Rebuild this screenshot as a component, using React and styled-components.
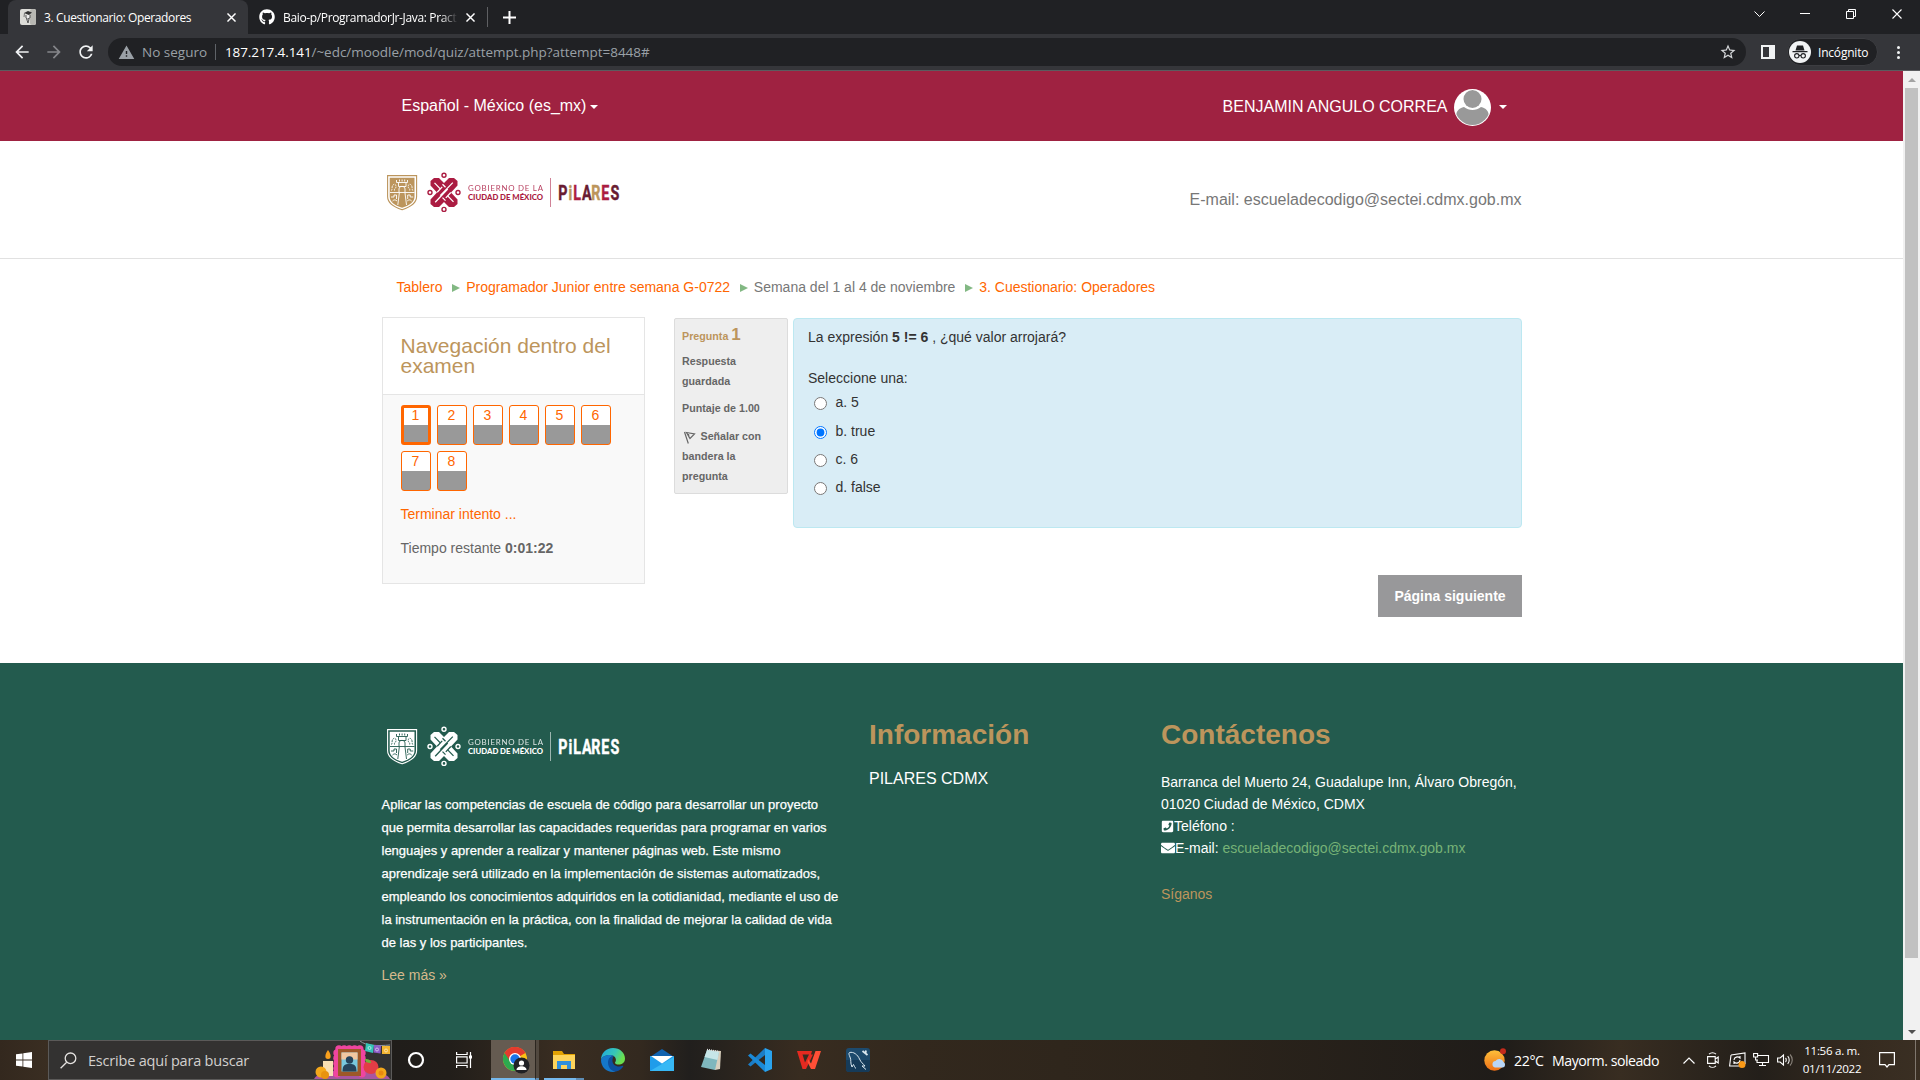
import React from "react";
import styled, { createGlobalStyle } from "styled-components";
import { FaGithub, FaEnvelope, FaPhoneSquare } from "react-icons/fa";
import { MdWarning, MdStarBorder, MdArrowBack, MdArrowForward, MdRefresh } from "react-icons/md";

const GlobalStyle = createGlobalStyle`
  * { box-sizing: border-box; }
  body { margin: 0; overflow: hidden; background: #fff; }
  a { color: inherit; text-decoration: none; }
  svg { display: block; flex: none; }
`;

const sans = `"Liberation Sans", Arial, sans-serif`;
const ui = `"Open Sans", "Noto Sans", sans-serif`;

const Screen = styled.div`
  width: 1920px;
  height: 1080px;
  display: flex;
  flex-direction: column;
  overflow: hidden;
`;

/* ---------- browser ---------- */

const Browser = styled.header`
  height: 71px;
  flex: none;
  background: #35363a;
  border-bottom: 1px solid #5b5c5f;
  font-family: ${ui};
`;
const TabStrip = styled.div`
  height: 34px;
  display: flex;
  align-items: flex-end;
  padding-left: 8px;
  background: #202124;
  color: #fff;
`;
const Tab = styled.div`
  width: ${(p) => p.$w}px;
  height: 34px;
  display: flex;
  align-items: center;
  padding: 0 12px 0 ${(p) => (p.$active ? 12 : 11)}px;
  gap: 8px;
  border-radius: 8px 8px 0 0;
  background: ${(p) => (p.$active ? "#35363a" : "transparent")};
`;
const TabTitle = styled.span`
  flex: 1;
  font-size: 12px;
  letter-spacing: ${(p) => p.$ls}px;
  white-space: nowrap;
  mask-image: ${(p) => (p.$fade ? "linear-gradient(90deg, #000 90%, transparent)" : "none")};
`;
const TabDivider = styled.i`
  width: 1px;
  height: 20px;
  margin: 0 15px 7px 0;
  background: #5f6063;
`;
const NewTab = styled.div`
  height: 34px;
  display: flex;
  align-items: center;
`;
const WindowButtons = styled.div`
  margin-left: auto;
  height: 28px;
  align-self: flex-start;
  display: flex;
  align-items: center;
`;
const WindowButton = styled.div`
  width: 46px;
  display: flex;
  justify-content: center;
`;
const Toolbar = styled.div`
  height: 36px;
  display: flex;
  align-items: center;
  padding-left: 12px;
`;
const NavIcon = styled.div`
  width: 32px;
  display: flex;
  color: ${(p) => (p.$dim ? "#85868a" : "#f1f3f4")};
`;
const AddressBar = styled.div`
  width: 1638px;
  height: 28px;
  display: flex;
  align-items: center;
  padding: 0 9px 0 10px;
  border-radius: 14px;
  background: #202124;
  color: #9aa0a6;
  font-size: 14px;
  white-space: nowrap;
`;
const NotSecure = styled.span`
  margin-left: 7px;
  width: 73px;
  font-size: 13.5px;
`;
const BarDivider = styled.i`
  width: 1px;
  height: 16px;
  margin-right: 9px;
  background: #5f6368;
`;
const Url = styled.span`
  flex: 1;
  font-size: 13.5px;
  letter-spacing: -0.04px;
  b { font-weight: 400; color: #fff; letter-spacing: -0.1px; }
`;
const SidePanel = styled.i`
  width: 14px;
  height: 14px;
  margin: 0 12px 0 15px;
  border: 2px solid #f1f3f4;
  border-right-width: 6px;
`;
const Incognito = styled.div`
  width: 91px;
  height: 28px;
  display: flex;
  align-items: center;
  gap: 7px;
  padding-left: 1px;
  border: 1px solid #3c3d41;
  border-radius: 14px;
  background: #202124;
  color: #fff;
  font-size: 12px;
  letter-spacing: -0.2px;
`;
const Dots = styled.div`
  display: grid;
  gap: 2px;
  margin-left: 19px;
  i { width: 3px; height: 3px; border-radius: 50%; background: #f1f3f4; }
`;

/* ---------- page ---------- */

const Viewport = styled.div`
  height: 969px;
  flex: none;
  display: flex;
`;
const Page = styled.div`
  width: 1903px;
  display: flex;
  flex-direction: column;
  font-family: ${sans};
  font-size: 14px;
  color: #777;
  background: #fff;
`;
const Container = styled.div`
  width: 1140px;
  margin-left: 382px;
`;
const TopBar = styled.div`
  height: 70px;
  background: #9f2241;
  color: #fff;
  font-size: 16px;
`;
const TopBarInner = styled(Container)`
  height: 70px;
  display: flex;
  align-items: center;
  justify-content: space-between;
  padding: 0 15.5px 0 19.5px;
`;
const MenuToggle = styled.a`
  display: flex;
  align-items: center;
  height: 37px;
  margin-top: ${(p) => p.$lift || 0}px;
`;
const Caret = styled.i`
  margin-left: ${(p) => p.$gap}px;
  margin-top: ${(p) => p.$drop}px;
  border: 4px solid transparent;
  border-top-color: #fff;
  border-bottom: 0;
`;
const AvatarBox = styled.span`
  margin-left: 6px;
`;
const Masthead = styled.div`
  height: 118px;
  border-bottom: 1px solid #e1e1e1;
`;
const MastheadInner = styled(Container)`
  display: flex;
  justify-content: space-between;
  padding: 27px 0.5px 0 0;
`;
const MastEmail = styled.span`
  font-size: 16px;
  line-height: 18px;
  margin-top: 23px;
`;
const Breadcrumb = styled(Container)`
  height: 58px;
  display: flex;
  align-items: center;
  padding: 0 0 2px 14.5px;
`;
const Crumb = styled.a`
  color: ${(p) => (p.$plain ? "#777" : "#f60")};
`;
const Arrow = styled.i`
  margin: 2px 5.8px 0 10px;
  border: 4px solid transparent;
  border-left: 8px solid #82b883;
  border-right: 0;
`;
const Main = styled(Container)`
  height: 346px;
  display: flex;
  align-items: flex-start;
`;
const NavBlock = styled.section`
  width: 263px;
  height: 267px;
  margin-right: 29px;
  border: 1px solid #e5e5e5;
  background: #f9f9f9;
  color: #666;
`;
const NavTitle = styled.h2`
  margin: 0;
  height: 77px;
  padding: 18px 18px 0 17.5px;
  border-bottom: 1px solid #e5e5e5;
  background: #fff;
  color: #bc955c;
  font-size: 21px;
  font-weight: 400;
  line-height: 20px;
`;
const QuizButtons = styled.div`
  display: flex;
  flex-wrap: wrap;
  gap: 6px;
  padding: 10px 18px 0;
`;
const QuizButton = styled.a`
  width: 30px;
  height: 40px;
  border: ${(p) => (p.$current ? 3 : 1)}px solid #f60;
  border-radius: 3px;
  background: linear-gradient(#fff 0 ${(p) => (p.$current ? 17 : 19)}px, #999 ${(p) => (p.$current ? 17 : 19)}px);
  color: #f60;
  line-height: ${(p) => (p.$current ? 14 : 18)}px;
  text-align: center;
  padding-right: 1px;
`;
const NavLine = styled.p`
  margin: ${(p) => p.$top}px 0 0 17.5px;
  line-height: 20px;
  color: ${(p) => (p.$link ? "#f60" : "#666")};
`;
const QuestionArea = styled.div`
  padding-top: 1px;
  width: 848px;
`;
const QuestionRow = styled.div`
  display: flex;
  align-items: flex-start;
  gap: 5px;
`;
const Info = styled.div`
  width: 114px;
  height: 176px;
  padding: 7px 7px;
  border: 1px solid #dcdcdc;
  border-radius: 2px;
  background: #eee;
  color: #666;
  font-size: 10.7px;
  font-weight: 700;
  line-height: 20px;
`;
const InfoHead = styled.h3`
  margin: 0;
  height: 25px;
  color: #bc955c;
  font-size: 10.7px;
  line-height: 18px;
  b { font-size: 17px; }
`;
const InfoText = styled.div`
  margin-bottom: ${(p) => p.$mb || 0}px;
  svg { display: inline-block; vertical-align: -4px; margin: 0 4.5px 0 1px; }
`;
const Question = styled.div`
  width: 729px;
  height: 210px;
  padding: 8px 14px;
  border: 1px solid #bce8f1;
  border-radius: 4px;
  background: #d9edf6;
  color: #333;
`;
const Statement = styled.p`
  margin: 0;
  line-height: 20px;
`;
const Prompt = styled.p`
  margin: 21px 0 0;
  line-height: 20px;
`;
const Choices = styled.div`
  display: flex;
  flex-direction: column;
  gap: 8.4px;
  padding: 4.2px 0 0 6px;
`;
const Choice = styled.label`
  display: flex;
  height: 20px;
  line-height: 20px;
  input { width: 13px; height: 13px; margin: 5px 8.500px 0 0; }
`;
const NextRow = styled.div`
  display: flex;
  justify-content: flex-end;
  margin-top: 47px;
`;
const NextButton = styled.button`
  width: 144px;
  height: 42px;
  padding: 0;
  border: 0;
  background: #98989a;
  color: #fff;
  font: 700 14px ${sans};
`;
const Footer = styled.footer`
  flex: 1;
  background: #235b4e;
  color: #fff;
`;
const FooterCols = styled(Container)`
  display: grid;
  grid-template-columns: 487px 292px 361px;
`;
const About = styled.div`
  padding-top: 59px;
`;
const AboutText = styled.p`
  width: 462px;
  margin: 23px 0 11px -0.5px;
  font-size: 13px;
  line-height: 23px;
  -webkit-text-stroke: 0.25px #fff;
  white-space: nowrap;
`;
const More = styled.a`
  display: block;
  margin-left: -0.5px;
  line-height: 20px;
  color: #d6b98c;
`;
const FooterCol = styled.div`
  padding-top: 57px;
`;
const FooterTitle = styled.h2`
  margin: 0 0 ${(p) => p.$mb}px;
  color: #bc955c;
  font-size: 28px;
  line-height: 30px;
`;
const InfoLink = styled.a`
  font-size: 16px;
  line-height: 22px;
`;
const ContactLine = styled.div`
  display: flex;
  align-items: center;
  height: 22px;
  white-space: pre;
  a { color: #77b377; }
`;
const Follow = styled.div`
  margin-top: 24px;
  line-height: 22px;
  color: #bc955c;
`;
const ScrollBar = styled.div`
  width: 17px;
  display: flex;
  flex-direction: column;
  align-items: center;
  background: #f1f1f1;
`;
const ScrollArrow = styled.i`
  margin: ${(p) => (p.$down ? "auto 0 6px" : "7px 0")};
  border: 4px solid transparent;
  ${(p) => (p.$down ? "border-top-color: #505050; border-bottom: 0;" : "border-bottom-color: #a3a3a3; border-top: 0;")}
`;
const Thumb = styled.i`
  width: 13px;
  height: 870px;
  margin-top: -1px;
  background: #c1c1c1;
`;

/* ---------- taskbar ---------- */

const Taskbar = styled.div`
  height: 40px;
  flex: none;
  display: flex;
  align-items: center;
  background: linear-gradient(90deg, #33281e 0, #3a2e22 48px, #201d1a 395px, #221e1a 450px, #392d21 560px, #33291f 640px, #211f1d 690px, #382c20 800px, #32281d 920px, #2c241b 1200px, #1f1c19 1500px, #382d21 1620px, #231f1a 1760px, #352a1f 1850px, #3a2f23);
  color: #fff;
  font-family: ${ui};
`;
const StartCell = styled.div`
  width: 48px;
  padding-left: 16px;
`;
const Search = styled.div`
  width: 344px;
  height: 40px;
  display: flex;
  align-items: center;
  padding-left: 11px;
  border: 1px solid #5b5a59;
  background: #333231;
`;
const SearchText = styled.span`
  width: 226px;
  margin-left: 11px;
  color: #d2d0ce;
  font-size: 14.5px;
  letter-spacing: -0.2px;
  white-space: nowrap;
`;
const TaskCell = styled.div`
  width: ${(p) => p.$w}px;
  height: 40px;
  display: flex;
  align-items: center;
  justify-content: center;
  background: ${(p) => (p.$active ? "#655b51" : "transparent")};
  border-bottom: ${(p) => (p.$line ? "2px solid #76b9ed" : "2px solid transparent")};
  padding: 2px ${(p) => p.$pr || 0}px 0 ${(p) => p.$pl || 0}px;
`;
const Stack = styled.i`
  width: ${(p) => p.$w}px;
  height: 40px;
  margin: 0 5px 0 0;
  background: ${(p) => (p.$lit ? "#51483f" : "transparent")};
  border-bottom: 2px solid #5e8db5;
  border-left: ${(p) => (p.$lit ? "1px solid #2c2620" : "0")};
`;
const Tray = styled.div`
  margin-left: auto;
  display: flex;
  align-items: center;
`;
const Temperature = styled.span`
  width: ${(p) => p.$w}px;
  font-size: 14.2px;
  letter-spacing: ${(p) => p.$ls}px;
  white-space: nowrap;
`;
const TrayIcon = styled.div`
  width: ${(p) => p.$w}px;
`;
const Clock = styled.div`
  width: 70px;
  text-align: center;
  font-size: 11.6px;
  line-height: 18px;
  letter-spacing: -0.3px;
  padding-bottom: 1px;
  white-space: nowrap;
`;
const DesktopEdge = styled.i`
  width: 1px;
  height: 40px;
  margin: 0 4px 0 20px;
  background: #7f776e;
`;

function Cross({ size = 8, sw = 1.6 }) {
  return (
    <svg width={size} height={size} viewBox="0 0 10 10" stroke="#fff" strokeWidth={sw}>
      <path d="M.5.5l9 9M9.5.5l-9 9" />
    </svg>
  );
}

function MoodleIcon() {
  return (
    <svg width="16" height="16" viewBox="0 0 16 16">
      <rect width="16" height="16" rx="2" fill="#dcdcd8" />
      <rect x="10" width="6" height="16" rx="2" fill="#b7b7b2" />
      <path d="M4 4l4-2 4 1.500-3 2.500z" fill="#333" />
      <path d="M6 6v3l1.500 1L10 9V6M6.500 9.500L8 14l1-4" stroke="#555" fill="#eee" />
      <path d="M4.500 4l-.5 4" stroke="#777" />
    </svg>
  );
}

const wordmark = [
  ["P", 176.2, "wine"],
  ["i", 186.600, "gold"],
  ["L", 191.200, "red"],
  ["A", 200, "wine"],
  ["R", 209.200, "gold"],
  ["E", 219.300, "red"],
  ["S", 228.600, "wine"],
];

function Logo({ light, height = 48 }) {
  const gold = light ? "#fff" : "#bc955c";
  const red = light ? "#fff" : "#ab1c42";
  const wine = light ? "#fff" : "#691c32";
  const bg = light ? "#235b4e" : "#fff";
  const tones = { gold, red, wine };
  const rings = [[62, 7.2], [62, 41.4], [48, 24.5], [76, 24.5]];
  return (
    <svg width="240" height={height} viewBox="0 0 240 48" preserveAspectRatio="none">
      <path d="M5.6 7.6h29v21c0 7-6 10.500-14.500 13.200C11.600 39.100 5.600 35.600 5.600 28.600z" fill={bg} stroke={gold} strokeWidth="1.100" />
      <path d="M7.700 9.700h24.800v18.800c0 5.600-4.600 8.600-12.400 11.200-7.800-2.600-12.400-5.600-12.400-11.200z" fill={gold} />
      <g fill="none" stroke={bg} strokeWidth="0.900">
        <path d="M8 24.500h24.500M14.500 12v2.500h11V12M16.500 14.500v4h7.500v-4M17.500 11.500v2M20.100 11.500v2M22.700 11.500v2" />
        <path d="M9.500 22.500c1-1.500 0-4 1.500-5.500s3-.5 3 1.500-2 2-1.500 4M30.700 22.500c-1-1.500 0-4-1.500-5.500s-3-.5-3 1.500 2 2 1.500 4" strokeDasharray="1.800 .8" />
        <path d="M17 24.500V21c0-3.500 6-3.500 6 0v3.500M17.300 25l-1.500 12M23 25l1.500 12" />
        <path d="M9 29h3v-2h2.500v4M31.200 29h-3v-2h-2.500v4M10.500 33c1.500-1.500 3-1.500 4.500 0M25.200 33c1.500-1.500 3-1.500 4.500 0" />
      </g>
      <g fill={bg} stroke={red} strokeWidth="1.400">
        {rings.map(([x, y]) => <circle key={x + "-" + y} cx={x} cy={y} r="2" />)}
      </g>
      <g transform="translate(62 24.400)">
        <path d="M-13.500-11.500l3.500-3h5L0-9.500l5-5h5l3.500 3v4.500L7 0l6.500 7v4.500l-3.500 3H5L0 9.500l-5 5h-5l-3.500-3V7L-7 0l-6.500-7z" fill={red} />
        <g stroke={bg} strokeWidth="1.300" fill="none">
          <path d="M-9.500-9.500l5.800 6M9.500 9.500L3.700 3.500" />
          <path d="M8.800-9.800L-3.800 3.200M3.700-3.400L-8.800 9.800" />
          <path d="M-6.800-.1l5-5.400M6.800.1l-5 5.400M-1.500-8.200l3 3M1.500 8.200l-3-3" />
        </g>
      </g>
      <text x="86" y="22.700" fontFamily="Lato, sans-serif" fontSize="7.900" fill={red} opacity="0.850" textLength="75" lengthAdjust="spacing">GOBIERNO DE LA</text>
      <text x="86" y="31.700" fontFamily="Lato, sans-serif" fontSize="7.900" fontWeight="900" fill={red} textLength="75" lengthAdjust="spacingAndGlyphs">CIUDAD DE MÉXICO</text>
      <path d="M168.500 10v29" stroke={red} opacity="0.550" />
      <text transform="scale(.68 1)" y="31.700" fontFamily="Roboto, sans-serif" fontSize="21" fontWeight="700" strokeWidth="0.500">
        {wordmark.map(([ch, x, tone]) => <tspan key={ch} x={x / 0.68} fill={tones[tone]} stroke={tones[tone]}>{ch}</tspan>)}
      </text>
    </svg>
  );
}

function Avatar() {
  return (
    <svg width="37" height="37" viewBox="0 0 37 37">
      <defs><clipPath id="av"><circle cx="18.500" cy="18.500" r="17.500" /></clipPath></defs>
      <circle cx="18.500" cy="18.500" r="18.500" fill="#fff" />
      <g clipPath="url(#av)" fill="#999">
        <circle cx="18.500" cy="10" r="9" />
        <path d="M2 28c0-6 3-9 8-10 5 4 12 4 17 0 5 1 8 4 8 10v9H2z" />
      </g>
    </svg>
  );
}

function FlagIcon() {
  return (
    <svg width="13" height="14" viewBox="0 0 13 14" fill="none" stroke="#666" strokeWidth="1.200">
      <path d="M1.500 2l3.800 11.500M3.500 2.500l8 1.500-4.500 4.500zM5.500 4l.5 3.500" />
    </svg>
  );
}

function DayOfDeadArt() {
  const petals = [];
  for (let i = 0; i < 5; i++) petals.push([25 + i * 5.2, 8]);
  for (let i = 0; i < 5; i++) petals.push([23, 12 + i * 5.200], [48, 12 + i * 5.200]);
  return (
    <svg width="76" height="38" viewBox="0 0 76 38">
      <path d="M0 38c4-7 18-9 38-9s34 2 38 9z" fill="#a8569f" />
      <path d="M46 0c6 5 18 5 30 4" stroke="#8d9aa0" fill="none" />
      <path d="M52 2l8 2-1 8-8-2z" fill="#35c4b5" />
      <path d="M60 4l7 .5-.5 8-7-1z" fill="#8d5cc7" />
      <path d="M68 5h8v8h-8z" fill="#f3b531" />
      <g fill="none" stroke="#fff" opacity="0.600"><circle cx="55.500" cy="7" r="1.500" /><circle cx="63" cy="8.500" r="1.500" /><circle cx="72" cy="9.500" r="1.500" /></g>
      <g fill="#f0459f">{petals.map(([x, y], i) => <circle key={i} cx={x} cy={y} r="3.700" />)}</g>
      <path d="M24 8h23v27H24z" fill="#9d5828" />
      <path d="M27.500 11.500h16v19h-16z" fill="#78c9df" />
      <path d="M27.500 11.500h16v7h-16z" fill="#f1c7a0" />
      <circle cx="35.500" cy="19" r="3.700" fill="#25445c" />
      <path d="M28.500 30.500c0-6 2-7.500 7-7.500s7 1.500 7 7.500z" fill="#25445c" />
      <path d="M9 20h10v15H9z" fill="#f7dfb4" />
      <path d="M14 9c3 4 4 9 0 9s-3-5 0-9z" fill="#f9a11d" />
      <ellipse cx="57" cy="26" rx="7.500" ry="7" fill="#e23d46" />
      <path d="M51 18c4 0 6 1 6 4-4 0-6-1-6-4z" fill="#6fb23c" />
      <circle cx="7" cy="31" r="5.500" fill="#f3a71b" /><circle cx="11" cy="34" r="4" fill="#e8930f" />
      <circle cx="67" cy="32" r="5.500" fill="#f3a71b" /><circle cx="67" cy="32" r="2.500" fill="#e8890f" />
    </svg>
  );
}

function ChromeIcon() {
  return (
    <svg width="28" height="28" viewBox="0 0 28 28">
      <circle cx="13" cy="13" r="12" fill="#fbc116" />
      <path d="M13 13L2.600 7A12 12 0 0 1 23.400 7z" fill="#e33b2e" />
      <path d="M13 13L2.600 7A12 12 0 0 0 13 25l5-9z" fill="#2da94f" />
      <path d="M13 7h10.400A12 12 0 0 0 2.600 7L8 15z" fill="#e33b2e" />
      <circle cx="13" cy="13" r="6" fill="#fff" /><circle cx="13" cy="13" r="4.700" fill="#1a73e8" />
      <circle cx="19.500" cy="19.500" r="8" fill="#202124" />
      <circle cx="19.500" cy="17" r="2.600" fill="#fff" /><path d="M14.500 24c0-5 10-5 10 0z" fill="#fff" />
    </svg>
  );
}
function FolderIcon() {
  return (
    <svg width="22" height="20" viewBox="0 0 22 20">
      <path d="M0 1h9l2 3h11v5H0z" fill="#e2a203" /><path d="M0 5h22v14H0z" fill="#fdd45b" />
      <path d="M4 19v-8h14v8h-4v-4H8v4z" fill="#2f8fdc" />
    </svg>
  );
}
function EdgeIcon() {
  return (
    <svg width="24" height="24" viewBox="0 0 24 24">
      <defs>
        <linearGradient id="eg" x1="0" y1="0" x2="1" y2="0.400"><stop stopColor="#1da6e2" /><stop offset="0.600" stopColor="#37c6b6" /><stop offset="1" stopColor="#6be04d" /></linearGradient>
      </defs>
      <path d="M0 12C0 5 5 0 12 0s12 5 12 10.500c0 4-3 6-6.500 6-2 0-3.500-.8-3.500-1.800 0-.7.900-1.200.9-3 0-2.500-2.400-4.700-6-4.700C4 7 .5 9.500 0 12z" fill="url(#eg)" />
      <path d="M0 12c.5-3 4-5 8.900-5 1.500 0 2.900.5 3.900 1.200-3.300-.2-5.800 3.300-4.300 7.300 1.500 4 5 8 6.500 8.100-1 .3-2 .4-3 .4C5 24 0 18.500 0 12z" fill="#1577c9" />
      <path d="M12.800 8.200C9.300 8.200 7 10.500 7 14.500c0 5 3.500 9 8 9.100 3.500-.8 6-3 7.300-5.300.2-.5-.2-.8-.7-.5-5 2-10.200-.3-10.200-5.300 0-1.700.6-3.300 1.400-4.300z" fill="#0d4f9e" />
    </svg>
  );
}
function MailIcon() {
  return (
    <svg width="24" height="24" viewBox="0 0 24 24">
      <path d="M0 9l12-8 12 8v3H0z" fill="#0f62b0" /><path d="M0 8h24v15H0z" fill="#1f9cea" />
      <path d="M0 23L24 9v14z" fill="#37b8f5" /><path d="M1 8h22l-11 7.500z" fill="#fff" />
    </svg>
  );
}
function NotepadIcon() {
  return (
    <svg width="24" height="24" viewBox="0 0 24 24">
      <path d="M8 2l14 1-1 18-5 1z" fill="#d8cfbd" /><path d="M8 2l12 2-4 18-14-3z" fill="#7fb7bd" />
      <path d="M8 2l12 2-1.500 8-13-3z" fill="#c7e6e8" /><path d="M8 1.500l12 2" stroke="#e5e5e5" strokeWidth="1.500" strokeDasharray="1 1" />
    </svg>
  );
}
function CodeIcon() {
  return (
    <svg width="24" height="24" viewBox="0 0 24 24">
      <path d="M17 0l7 3v18l-7 3z" fill="#2aa3ee" />
      <path d="M0 16.500L17 0v7L2.500 18.500z" fill="#1b7dc6" />
      <path d="M0 7.500l2.500-2L17 17v7z" fill="#1a8ad8" />
    </svg>
  );
}
function WpsIcon() {
  return (
    <svg width="24" height="20" viewBox="0 0 24 20">
      <path d="M0 1h15l-1 3.500H5.500l2.500 8 4-8h4L9 19H5.500z" fill="#e52a20" />
      <path d="M11 9l3 4.500L18.500 1H24l-6 18h-4l-3.500-7z" fill="#ff4f36" />
    </svg>
  );
}
function MysqlIcon() {
  return (
    <svg width="24" height="24" viewBox="0 0 24 24">
      <rect width="24" height="24" rx="3" fill="#1d4a6d" /><path d="M0 12h24v9a3 3 0 0 1-3 3H3a3 3 0 0 1-3-3z" fill="#163b59" />
      <path d="M6 19c-2-4-.5-7-2-10-1-2-1.500-4-.5-4.500 4-1 8 2 10 6.500 1.500 3.500 3.500 4.500 5.500 7h-3l4 3.500M6 19l1.500-2.500c1 1.500 1 3 2.500 4" fill="none" stroke="#dbe8f0" strokeWidth="1" />
      <path d="M16.500 3l5 4M20 2.500l-.5 3" stroke="#dbe8f0" strokeWidth="1.800" fill="none" />
    </svg>
  );
}

function WeatherIcon() {
  return (
    <svg width="24" height="24" viewBox="0 0 24 24">
      <defs><linearGradient id="sun" x2="0" y2="1"><stop stopColor="#fdbf3a" /><stop offset="1" stopColor="#ee6f16" /></linearGradient></defs>
      <circle cx="10.500" cy="12.500" r="10.200" fill="url(#sun)" />
      <path d="M11 19.500a3.300 3.300 0 0 1 .5-6.500 4.500 4.500 0 0 1 8 1 3 3 0 0 1-.5 5.500z" fill="#b9d6f7" />
      <circle cx="19" cy="3.200" r="3" fill="#c42b1c" />
    </svg>
  );
}

const crumbs = [
  { text: "Tablero" },
  { text: "Programador Junior entre semana G-0722" },
  { text: "Semana del 1 al 4 de noviembre", plain: true },
  { text: "3. Cuestionario: Operadores" },
];
const choices = ["a. 5", "b. true", "c. 6", "d. false"];
const apps = [EdgeIcon, MailIcon, NotepadIcon, CodeIcon, WpsIcon, MysqlIcon];

function BrowserChrome() {
  return (
    <Browser>
      <TabStrip>
        <Tab $w={240} $active>
          <MoodleIcon />
          <TabTitle $ls={-0.38}>3. Cuestionario: Operadores</TabTitle>
          <Cross size={9} />
        </Tab>
        <Tab $w={239}>
          <FaGithub size={16} />
          <TabTitle $ls={-0.35} $fade>Baio-p/ProgramadorJr-Java: Pract</TabTitle>
          <Cross size={9} />
        </Tab>
        <TabDivider />
        <NewTab>
          <svg width="13" height="13" viewBox="0 0 13 13" stroke="#fff" strokeWidth="2"><path d="M6.500 0v13M0 6.500h13" /></svg>
        </NewTab>
        <WindowButtons>
          <WindowButton><svg width="11" height="7" viewBox="0 0 11 7" fill="none" stroke="#fff"><path d="M.5.5l5 5 5-5" /></svg></WindowButton>
          <WindowButton><svg width="10" height="2" viewBox="0 0 10 2"><path d="M0 0h10v1H0z" fill="#fff" /></svg></WindowButton>
          <WindowButton><svg width="10" height="10" viewBox="0 0 10 10" fill="none" stroke="#fff"><path d="M.5 2.500h7v7h-7zM2.500 2V.5h7v7H8" /></svg></WindowButton>
          <WindowButton><Cross size={10} sw={1.100} /></WindowButton>
        </WindowButtons>
      </TabStrip>
      <Toolbar>
        <NavIcon><MdArrowBack size={20} /></NavIcon>
        <NavIcon $dim><MdArrowForward size={20} /></NavIcon>
        <NavIcon><MdRefresh size={20} /></NavIcon>
        <AddressBar>
          <MdWarning size={17} />
          <NotSecure>No seguro</NotSecure>
          <BarDivider />
          <Url><b>187.217.4.141</b>/~edc/moodle/mod/quiz/attempt.php?attempt=8448#</Url>
          <MdStarBorder size={18} color="#d5d7da" />
        </AddressBar>
        <SidePanel />
        <Incognito>
          <svg width="22" height="22" viewBox="0 0 22 22">
            <circle cx="11" cy="11" r="11" fill="#f1f3f4" />
            <path d="M6.500 9.500L8 4.500h6l1.500 5zM3.500 10h15v1.200h-15z" fill="#202124" />
            <g fill="none" stroke="#202124" strokeWidth="1.100"><circle cx="7.800" cy="14.800" r="2.200" /><circle cx="14.200" cy="14.800" r="2.200" /><path d="M10 14.500h2" /></g>
          </svg>
          Incógnito
        </Incognito>
        <Dots><i /><i /><i /></Dots>
      </Toolbar>
    </Browser>
  );
}

function QuizPage() {
  return (
    <Page>
      <TopBar>
        <TopBarInner>
          <MenuToggle $lift={-1}>Español - México (es_mx)<Caret $gap={3.5} $drop={3} /></MenuToggle>
          <MenuToggle $lift={2}>BENJAMIN ANGULO CORREA<AvatarBox><Avatar /></AvatarBox><Caret $gap={8} $drop={0} /></MenuToggle>
        </TopBarInner>
      </TopBar>
      <Masthead>
        <MastheadInner>
          <Logo />
          <MastEmail>E-mail: escueladecodigo@sectei.cdmx.gob.mx</MastEmail>
        </MastheadInner>
      </Masthead>
      <Breadcrumb>
        {crumbs.map((c, i) => (
          <React.Fragment key={c.text}>
            {i > 0 && <Arrow />}
            <Crumb $plain={c.plain}>{c.text}</Crumb>
          </React.Fragment>
        ))}
      </Breadcrumb>
      <Main>
        <NavBlock>
          <NavTitle>Navegación dentro del examen</NavTitle>
          <QuizButtons>
            {[1, 2, 3, 4, 5, 6, 7, 8].map((n) => <QuizButton key={n} $current={n === 1}>{n}</QuizButton>)}
          </QuizButtons>
          <NavLine $top={13} $link>Terminar intento ...</NavLine>
          <NavLine $top={14}>Tiempo restante <b>0:01:22</b></NavLine>
        </NavBlock>
        <QuestionArea>
          <QuestionRow>
            <Info>
              <InfoHead>Pregunta <b>1</b></InfoHead>
              <InfoText $mb={7}>Respuesta guardada</InfoText>
              <InfoText $mb={8}>Puntaje de 1.00</InfoText>
              <InfoText><FlagIcon />Señalar con bandera la pregunta</InfoText>
            </Info>
            <Question>
              <Statement>La expresión <b>5 != 6</b> , ¿qué valor arrojará?</Statement>
              <Prompt>Seleccione una:</Prompt>
              <Choices>
                {choices.map((c, i) => (
                  <Choice key={c}><input type="radio" name="answer" defaultChecked={i === 1} />{c}</Choice>
                ))}
              </Choices>
            </Question>
          </QuestionRow>
          <NextRow><NextButton>Página siguiente</NextButton></NextRow>
        </QuestionArea>
      </Main>
      <Footer>
        <FooterCols>
          <About>
            <Logo light />
            <AboutText>
              Aplicar las competencias de escuela de código para desarrollar un proyecto<br />
              que permita desarrollar las capacidades requeridas para programar en varios<br />
              lenguajes y aprender a realizar y mantener páginas web. Este mismo<br />
              aprendizaje será utilizado en la implementación de sistemas automatizados,<br />
              empleando los conocimientos adquiridos en la cotidianidad, mediante el uso de<br />
              la instrumentación en la práctica, con la finalidad de mejorar la calidad de vida<br />
              de las y los participantes.
            </AboutText>
            <More>Lee más »</More>
          </About>
          <FooterCol>
            <FooterTitle $mb={18}>Información</FooterTitle>
            <InfoLink>PILARES CDMX</InfoLink>
          </FooterCol>
          <FooterCol>
            <FooterTitle $mb={21}>Contáctenos</FooterTitle>
            <ContactLine>Barranca del Muerto 24, Guadalupe Inn, Álvaro Obregón,</ContactLine>
            <ContactLine>01020 Ciudad de México, CDMX</ContactLine>
            <ContactLine><FaPhoneSquare size={13} />Teléfono :</ContactLine>
            <ContactLine><FaEnvelope size={14} />E-mail: <a>escueladecodigo@sectei.cdmx.gob.mx</a></ContactLine>
            <Follow>Síganos</Follow>
          </FooterCol>
        </FooterCols>
      </Footer>
    </Page>
  );
}

function WindowsTaskbar() {
  return (
    <Taskbar>
      <StartCell>
        <svg width="16" height="16" viewBox="0 0 16 16" fill="#fff"><path d="M0 2.300l6.500-.9v6.200H0zM7.300 1.300L16 0v7.600H7.300zM0 8.400h6.500v6.200L0 13.700zM7.300 8.400H16V16l-8.700-1.300z" /></svg>
      </StartCell>
      <Search>
        <svg width="17" height="17" viewBox="0 0 17 17" fill="none" stroke="#e4e2e0" strokeWidth="1.300"><circle cx="10.500" cy="6.300" r="5.300" /><path d="M6.700 10.200L.6 16.300" /></svg>
        <SearchText>Escribe aquí para buscar</SearchText>
        <DayOfDeadArt />
      </Search>
      <TaskCell $w={49} $pr={2}><svg width="18" height="18" viewBox="0 0 18 18" fill="none" stroke="#fff" strokeWidth="2.200"><circle cx="9" cy="9" r="7" /></svg></TaskCell>
      <TaskCell $w={50} $pr={4}>
        <svg width="17" height="16" viewBox="0 0 17 16" fill="none" stroke="#fff" strokeWidth="1.200"><path d="M.6 0v2.500h10.500V0M.6 16v-2.500h10.500V16M.6 4.800h10.500v6.200H.6zM14.500 0v16" /><path d="M13 3.500h3v3h-3z" fill="#fff" stroke="none" /></svg>
      </TaskCell>
      <TaskCell $w={44} $active $line $pl={6}><ChromeIcon /></TaskCell>
      <Stack $w={4} $lit />
      <TaskCell $w={32} $line $pl={7}><FolderIcon /></TaskCell>
      <Stack $w={8} />
      {apps.map((Icon, i) => <TaskCell key={i} $w={49} $pr={2}><Icon /></TaskCell>)}
      <Tray>
        <TrayIcon $w={30}><WeatherIcon /></TrayIcon>
        <Temperature $w={38} $ls={-0.4}>22°C</Temperature>
        <Temperature $w={131} $ls={-0.5}>Mayorm. soleado</Temperature>
        <TrayIcon $w={24}><svg width="12" height="7" viewBox="0 0 12 7" fill="none" stroke="#fff" strokeWidth="1.200"><path d="M.5 6.500L6 1l5.500 5.500" /></svg></TrayIcon>
        <TrayIcon $w={22}>
          <svg width="12" height="16" viewBox="0 0 12 16" fill="none" stroke="#fff" strokeWidth="1.100"><path d="M.6 4.600h7.600v6.800H.6zM8.200 7l3-2v6l-3-2M2 2.200C4 .2 7 .2 9 2.200M2 13.800c2 2 5 2 7 0" /></svg>
        </TrayIcon>
        <TrayIcon $w={24}>
          <svg width="17" height="16" viewBox="0 0 17 16" fill="none" stroke="#fff" strokeWidth="1.100"><path d="M2 3l14-2v11M2 3L.6 14H10M5 8c0-3 4-4 6-2V4M11 8c0 3-4 4-6 2v2" /><circle cx="13" cy="12.500" r="3.500" fill="#fb9a16" stroke="none" /></svg>
        </TrayIcon>
        <TrayIcon $w={24}>
          <svg width="17" height="16" viewBox="0 0 17 16" fill="none" stroke="#fff" strokeWidth="1.100"><path d="M5 3.500h10.500v7H4V8M9.500 10.500v3M6 13.500h7M.6 1.500h4v3.500h-4zM2.600 5v3H5" /></svg>
        </TrayIcon>
        <TrayIcon $w={20}>
          <svg width="17" height="14" viewBox="0 0 17 14" fill="none" stroke="#fff" strokeWidth="1.100"><path d="M.6 5h2.500L6.500 2v10L3.100 9H.6zM8.500 5c1 1 1 3 0 4M10.700 3.200c2 2 2 5.600 0 7.600" /><path d="M13 1.500c3 3 3 8 0 11" stroke="#8a837b" /></svg>
        </TrayIcon>
        <Clock>11:56 a. m.<br />01/11/2022</Clock>
        <TrayIcon $w={28}>
          <svg width="28" height="17" viewBox="-12 0 28 17" fill="none" stroke="#fff" strokeWidth="1.200"><path d="M.6.6h14.800v12H10L8 15l-2-2.400H.6z" /></svg>
        </TrayIcon>
        <DesktopEdge />
      </Tray>
    </Taskbar>
  );
}

export default function App() {
  return (
    <Screen>
      <GlobalStyle />
      <BrowserChrome />
      <Viewport>
        <QuizPage />
        <ScrollBar>
          <ScrollArrow />
          <Thumb />
          <ScrollArrow $down />
        </ScrollBar>
      </Viewport>
      <WindowsTaskbar />
    </Screen>
  );
}
